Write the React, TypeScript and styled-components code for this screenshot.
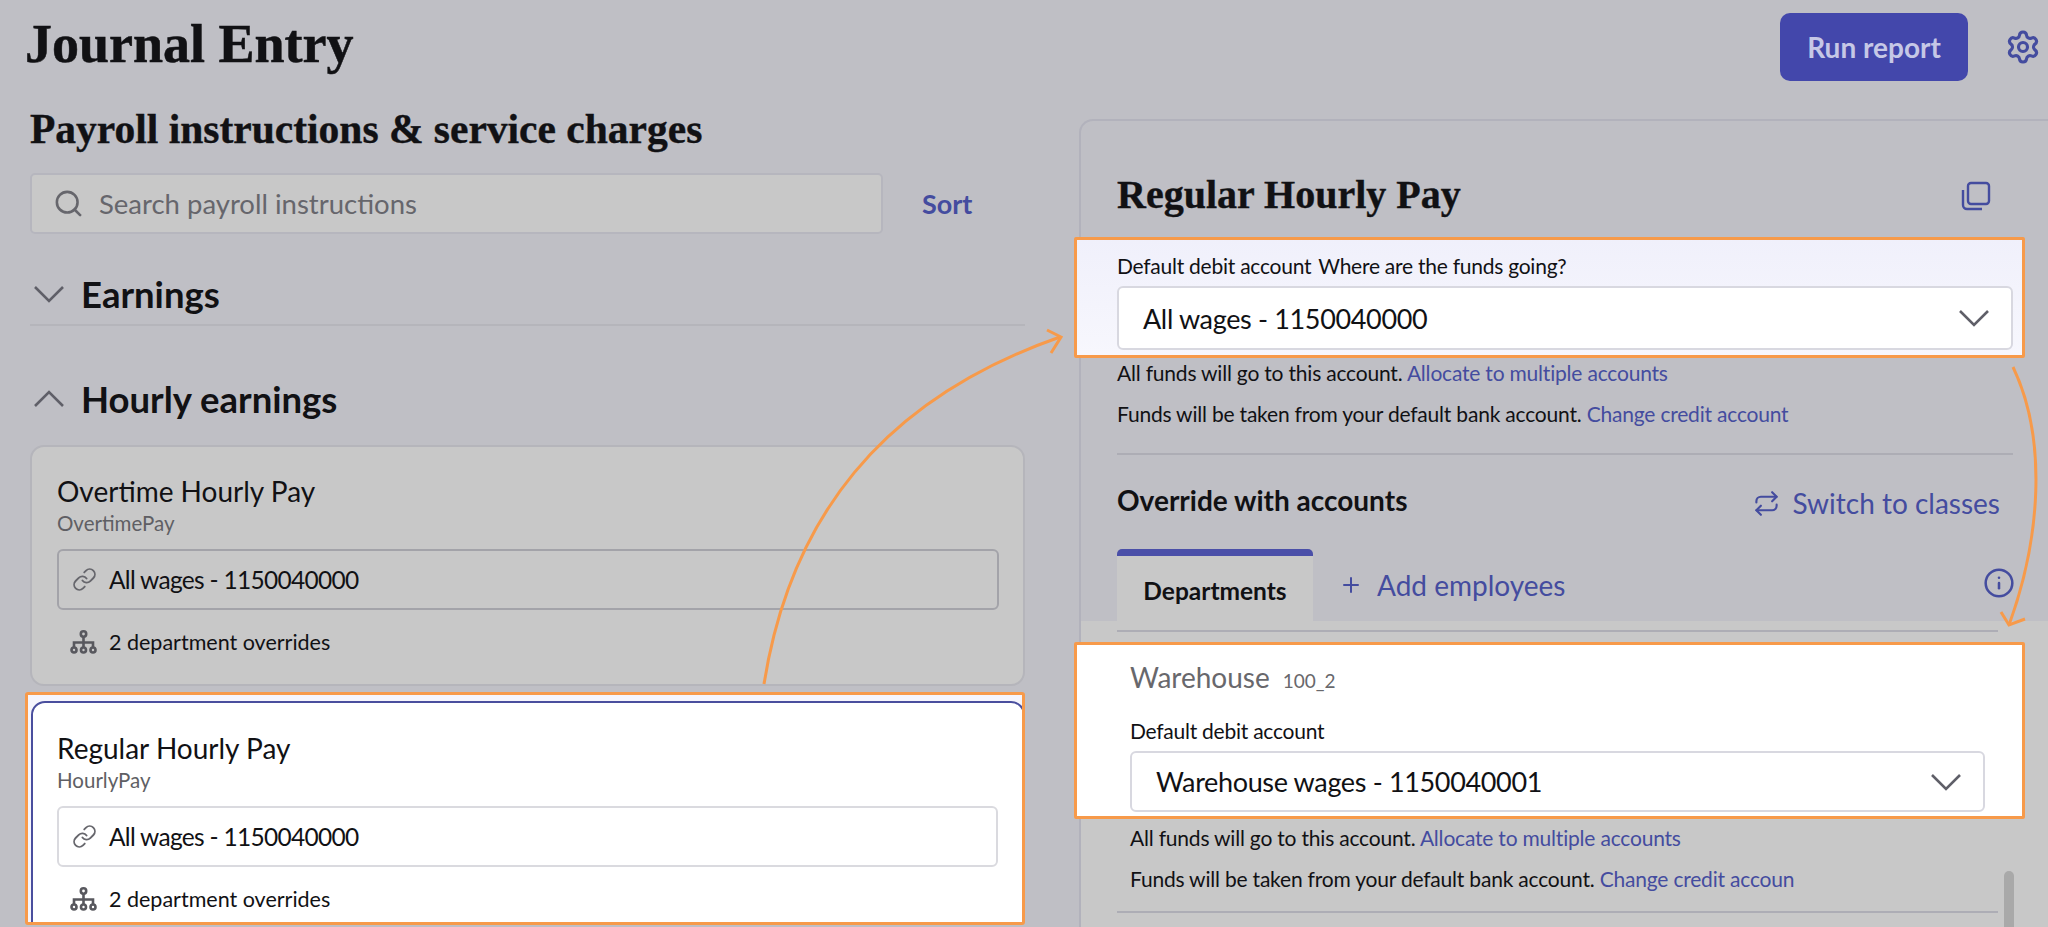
import styled, { createGlobalStyle } from "styled-components";
import { Search, Settings, Info, Plus, Link, Repeat } from "lucide-react";

const GlobalStyle = createGlobalStyle`
  html, body {
    margin: 0;
    padding: 0;
    background: #bfbfc5;
  }
  * {
    box-sizing: border-box;
  }
`;

const SANS = `"Lato", "Liberation Sans", sans-serif`;
const SERIF = `"Liberation Serif", serif`;
const BLUE = "#444c9f";
const ORANGE = "#f79a4a";

const Page = styled.div`
  position: relative;
  width: 2048px;
  height: 927px;
  overflow: hidden;
  background: #bfbfc5;
  font-family: ${SANS};
  color: #111114;
`;

const Header = styled.header`
  display: flex;
  align-items: center;
  height: 94px;
  padding: 0 7px 0 25px;
`;

const Title = styled.h1`
  flex: 1;
  margin: -6px 0 0;
  font-family: ${SERIF};
  font-size: 54px;
  font-weight: 700;
  line-height: 1;
  -webkit-text-stroke: 0.5px #111114;
`;

const RunButton = styled.button`
  width: 188px;
  height: 68px;
  margin: 0 37px 0 0;
  border: none;
  border-radius: 10px;
  background: #4347ab;
  color: #c6c8e6;
  font-family: ${SANS};
  font-size: 28px;
  font-weight: 700;
`;

const Columns = styled.div`
  display: grid;
  grid-template-columns: 1025px 969px;
  column-gap: 54px;
`;

const LeftColumn = styled.section`
  padding-left: 30px;
`;

const SectionTitle = styled.h2`
  margin: 15px 0 0;
  font-family: ${SERIF};
  font-size: 41.5px;
  font-weight: 700;
  line-height: 40px;
  -webkit-text-stroke: 0.4px #111114;
`;

const SearchRow = styled.div`
  display: flex;
  align-items: center;
  margin-top: 24px;
`;

const SearchBox = styled.div`
  display: flex;
  align-items: center;
  gap: 15px;
  width: 853px;
  height: 61px;
  padding-left: 21px;
  border: 2px solid #b6b6be;
  border-radius: 5px;
  background: #c8c8c8;
  color: #66666c;
  font-size: 27.5px;
`;

const SortLink = styled.span`
  margin-left: 39px;
  color: ${BLUE};
  font-size: 27px;
  font-weight: 700;
`;

const GroupHeader = styled.div<{ $ruled?: boolean }>`
  display: flex;
  align-items: center;
  gap: 17px;
  height: 62px;
  padding-left: 4px;
  border-bottom: ${(p) => (p.$ruled ? "2px solid #b5b5bb" : "none")};
  font-size: 36.5px;
  font-weight: 700;
`;

const EarningsGroup = styled(GroupHeader)`
  height: 92px;
  margin-top: 0;
  padding-top: 30px;
`;

const HourlyGroup = styled(GroupHeader)`
  height: 52px;
  margin: 47px 0 20px;
`;

const Card = styled.article<{ $selected?: boolean }>`
  height: ${(p) => (p.$selected ? "240px" : "241px")};
  margin-right: ${(p) => (p.$selected ? "-3px" : "0")};
  padding: ${(p) => (p.$selected ? "27px 25px 0 24px" : "26px 24px 0 25px")};
  border: 2px solid ${(p) => (p.$selected ? "#4a4f9e" : "#b5b5bb")};
  border-radius: 14px;
  background: ${(p) => (p.$selected ? "#ffffff" : "#c8c8c8")};
`;

const CardTitle = styled.div`
  font-size: 28px;
  line-height: 36px;
`;

const CardSub = styled.div`
  font-size: 20.5px;
  line-height: 28px;
  color: #5f5f64;
`;

const AccountField = styled.div<{ $selected?: boolean }>`
  display: flex;
  align-items: center;
  gap: 12px;
  height: 61px;
  margin-top: 12px;
  padding-left: 13px;
  border: 2px solid ${(p) => (p.$selected ? "#dadadf" : "#a3a3a9")};
  border-radius: 6px;
  font-size: 24.5px;
  letter-spacing: -0.7px;
  color: #111114;
  svg {
    color: #66666c;
  }
`;

const Overrides = styled.div`
  display: flex;
  align-items: center;
  gap: 12px;
  margin-top: 18px;
  padding-left: 13px;
  font-size: 21.5px;
  line-height: 28px;
`;

const SelectedFrame = styled.div`
  height: 233px;
  margin: 6px 0 0 -5px;
  padding: 6px 0 0 3px;
  border: 3px solid ${ORANGE};
  border-radius: 3px;
  background: #f5f5fc;
  overflow: hidden;
`;

const Panel = styled.aside`
  position: relative;
  height: 808px;
  margin-top: 25px;
  border: 2px solid #b2b2bc;
  border-right: none;
  border-bottom: none;
  border-top-left-radius: 14px;
`;

const PanelHead = styled.div`
  display: flex;
  align-items: center;
  justify-content: space-between;
  height: 116px;
  padding: 30px 57px 0 36px;
  svg {
    margin-top: 4px;
  }
`;

const PanelTitle = styled.h2`
  margin: 0;
  font-family: ${SERIF};
  font-size: 40px;
  font-weight: 700;
  -webkit-text-stroke: 0.4px #111114;
`;

const Highlight = styled.div<{ $plain?: boolean }>`
  width: 951px;
  margin-left: -7px;
  border: 3px solid ${ORANGE};
  border-radius: 2px;
  background: ${(p) =>
    p.$plain ? "#ffffff" : "linear-gradient(#f0f0fb, #f7f7fd)"};
`;

const DebitHighlight = styled(Highlight)`
  height: 121px;
  padding: 13px 9px 0 40px;
`;

const WarehouseHighlight = styled(Highlight)`
  height: 177px;
  margin-top: 10px;
  padding: 15px 37px 0 53px;
`;

const FieldLabel = styled.div`
  font-size: 21px;
  line-height: 26px;
  letter-spacing: -0.25px;
  span {
    margin-left: 7px;
  }
`;

const SelectBox = styled.div`
  display: flex;
  align-items: center;
  justify-content: space-between;
  height: 64px;
  margin-top: 7px;
  padding: 0 22px 0 24px;
  border: 2px solid #d8d8e0;
  border-radius: 6px;
  background: #ffffff;
  font-size: 27px;
  letter-spacing: -0.35px;
`;

const WarehouseSelect = styled(SelectBox)`
  height: 61px;
`;

const HelpLines = styled.div<{ $indent?: number; $top?: number }>`
  margin-top: ${(p) => p.$top ?? 0}px;
  padding: 0 0 0 ${(p) => p.$indent ?? 36}px;
  font-size: 21px;
  line-height: 26px;
  letter-spacing: -0.2px;
`;

const HelpLine = styled.p`
  margin: 0;
  height: 41px;
  padding-top: 2px;
  white-space: nowrap;
  a {
    color: ${BLUE};
  }
`;

const Rule = styled.hr<{ $right: number; $top?: number }>`
  height: 2px;
  margin: ${(p) => p.$top ?? 0}px ${(p) => p.$right}px 0 36px;
  border: none;
  background: #adadb5;
`;

const OverrideHead = styled.div`
  display: flex;
  align-items: center;
  justify-content: space-between;
  height: 94px;
  padding: 0 48px 4px 36px;
  font-size: 28px;
  font-weight: 700;
`;

const SwitchLink = styled.span`
  display: flex;
  align-items: center;
  gap: 12px;
  margin-top: 6px;
  color: ${BLUE};
  font-weight: 400;
`;

const TabRow = styled.div`
  display: flex;
  align-items: flex-start;
  height: 72px;
  padding-left: 36px;
`;

const ActiveTab = styled.div`
  display: flex;
  align-items: center;
  justify-content: center;
  width: 196px;
  height: 72px;
  padding-top: 3px;
  border-top: 7px solid #4a4fa8;
  border-radius: 5px 5px 0 0;
  background: #c8c8c8;
  font-size: 24.5px;
  font-weight: 700;
`;

const AddTab = styled.div`
  display: flex;
  align-items: center;
  gap: 14px;
  height: 72px;
  margin-left: 26px;
  color: ${BLUE};
  font-size: 28px;
`;

const InfoSlot = styled.div`
  display: flex;
  margin: 18px 33px 0 auto;
  color: ${BLUE};
`;

const LowerPane = styled.div`
  height: 320px;
  padding-top: 9px;
  background: #c8c8c8;
`;

const WarehouseName = styled.div`
  display: flex;
  align-items: baseline;
  gap: 13px;
  color: #68686c;
  font-size: 28px;
  line-height: 34px;
  small {
    font-size: 19px;
  }
`;

const GapLabel = styled(FieldLabel)`
  margin-top: 20px;
`;

const Scrollbar = styled.div`
  position: absolute;
  right: 34px;
  bottom: 0;
  width: 10px;
  height: 56px;
  border-radius: 5px 5px 0 0;
  background: #a9a9a9;
`;

const ArrowLayer = styled.svg`
  position: absolute;
  top: 0;
  left: 0;
  pointer-events: none;
`;

function Chevron({ up, size = 30 }: { up?: boolean; size?: number }) {
  const height = size * 0.6;
  return (
    <svg width={size} height={height} viewBox="0 0 30 18" fill="none">
      <polyline
        points={up ? "1,16 15,2 29,16" : "1,2 15,16 29,2"}
        stroke="#5f5f68"
        strokeWidth="2.6"
      />
    </svg>
  );
}

function OrgIcon() {
  return (
    <svg width="27" height="24" viewBox="0 0 27 24" fill="none" stroke="#58585e" strokeWidth="2.6">
      <circle cx="13.5" cy="4" r="2.7" />
      <path d="M13.5 7v10M4 17v-4.5h19v4.5" />
      <circle cx="4" cy="20" r="2.5" />
      <circle cx="13.5" cy="20" r="2.5" />
      <circle cx="23" cy="20" r="2.5" />
    </svg>
  );
}

function CopyIcon() {
  return (
    <svg width="30" height="30" viewBox="0 0 30 30" fill="none" stroke={BLUE} strokeWidth="2.4">
      <rect x="7" y="2" width="21" height="21" rx="3" />
      <path d="M2 9v15a4 4 0 0 0 4 4h15" />
    </svg>
  );
}

function OverviewCard({ title, sub, selected }: { title: string; sub: string; selected?: boolean }) {
  return (
    <Card $selected={selected}>
      <CardTitle>{title}</CardTitle>
      <CardSub>{sub}</CardSub>
      <AccountField $selected={selected}>
        <Link size={25} strokeWidth={1.8} />
        All wages - 1150040000
      </AccountField>
      <Overrides>
        <OrgIcon />
        2 department overrides
      </Overrides>
    </Card>
  );
}

export default function App() {
  return (
    <Page>
      <GlobalStyle />
      <Header>
        <Title>Journal Entry</Title>
        <RunButton>Run report</RunButton>
        <Settings size={36} color={BLUE} strokeWidth={2.1} />
      </Header>
      <Columns>
        <LeftColumn>
          <SectionTitle>Payroll instructions &amp; service charges</SectionTitle>
          <SearchRow>
            <SearchBox>
              <Search size={31} strokeWidth={2} />
              Search payroll instructions
            </SearchBox>
            <SortLink>Sort</SortLink>
          </SearchRow>
          <EarningsGroup $ruled>
            <Chevron />
            Earnings
          </EarningsGroup>
          <HourlyGroup>
            <Chevron up />
            Hourly earnings
          </HourlyGroup>
          <OverviewCard title="Overtime Hourly Pay" sub="OvertimePay" />
          <SelectedFrame>
            <OverviewCard title="Regular Hourly Pay" sub="HourlyPay" selected />
          </SelectedFrame>
        </LeftColumn>
        <Panel>
          <PanelHead>
            <PanelTitle>Regular Hourly Pay</PanelTitle>
            <CopyIcon />
          </PanelHead>
          <DebitHighlight>
            <FieldLabel>
              Default debit account<span>Where are the funds going?</span>
            </FieldLabel>
            <SelectBox>
              All wages - 1150040000
              <Chevron />
            </SelectBox>
          </DebitHighlight>
          <HelpLines>
            <HelpLine>
              All funds will go to this account. <a>Allocate to multiple accounts</a>
            </HelpLine>
            <HelpLine>
              Funds will be taken from your default bank account. <a>Change credit account</a>
            </HelpLine>
          </HelpLines>
          <Rule $right={35} $top={13} />
          <OverrideHead>
            Override with accounts
            <SwitchLink>
              <Repeat size={27} strokeWidth={1.9} />
              Switch to classes
            </SwitchLink>
          </OverrideHead>
          <TabRow>
            <ActiveTab>Departments</ActiveTab>
            <AddTab>
              <Plus size={24} strokeWidth={2} />
              Add employees
            </AddTab>
            <InfoSlot>
              <Info size={32} strokeWidth={1.9} />
            </InfoSlot>
          </TabRow>
          <LowerPane>
            <Rule $right={50} />
            <WarehouseHighlight $plain>
              <WarehouseName>
                Warehouse <small>100_2</small>
              </WarehouseName>
              <GapLabel>Default debit account</GapLabel>
              <WarehouseSelect>
                Warehouse wages - 1150040001
                <Chevron />
              </WarehouseSelect>
            </WarehouseHighlight>
            <HelpLines $indent={49} $top={4}>
              <HelpLine>
                All funds will go to this account. <a>Allocate to multiple accounts</a>
              </HelpLine>
              <HelpLine>
                Funds will be taken from your default bank account. <a>Change credit accoun</a>
              </HelpLine>
            </HelpLines>
            <Rule $right={50} $top={6} />
          </LowerPane>
          <Scrollbar />
        </Panel>
      </Columns>
      <ArrowLayer width="2048" height="927" viewBox="0 0 2048 927" fill="none" stroke={ORANGE} strokeWidth="3">
        <path d="M764 684 C790 520 880 400 1060 337" />
        <path d="M1047 330 L1061 337 L1051 353" />
        <path d="M2013 367 C2048 440 2040 540 2009 625" />
        <path d="M2001 612 L2009 625 L2025 619" />
      </ArrowLayer>
    </Page>
  );
}
